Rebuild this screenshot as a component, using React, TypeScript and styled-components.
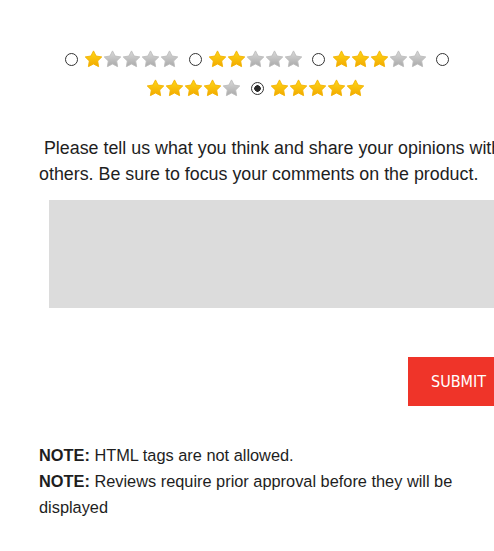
import React from "react";
import styled, { createGlobalStyle } from "styled-components";

const Global = createGlobalStyle`
  html, body {
    margin: 0;
    padding: 0;
    overflow: hidden;
    background: #fff;
  }
  body {
    font-family: "Liberation Sans", Arial, sans-serif;
    color: #1e1e1e;
  }
`;

const Page = styled.form`
  width: 471px;
  padding: 45px 0 0 39px;
  font-size: 16px;
`;

const RatingRow = styled.div`
  width: 434px;
  text-align: center;
  line-height: 29px;
`;

const Radio = styled.input`
  appearance: none;
  -webkit-appearance: none;
  display: inline-block;
  width: 13px;
  height: 13px;
  margin: 3px 3px 0 5px;
  padding: 0;
  border: 1px solid #333;
  border-radius: 50%;
  background: #fff;
  box-sizing: border-box;
  vertical-align: -1px;
  &:checked {
    background: radial-gradient(circle, #2a2a2a 0 3px, #fff 3.5px);
  }
`;

const StarImg = styled.svg`
  display: inline-block;
  vertical-align: -3px;
`;

const Intro = styled.p`
  width: 490px;
  margin: 32px 0 0 0;
  font-size: 17.85px;
  line-height: 26px;
`;

const Comment = styled.textarea`
  display: block;
  box-sizing: border-box;
  margin: 13px 0 0 10px;
  width: 461px;
  height: 108px;
  border: none;
  background: #dcdcdc;
  resize: none;
  outline: none;
`;

const ButtonRow = styled.div`
  display: flex;
  justify-content: flex-end;
  margin-top: 49px;
`;

const Submit = styled.button`
  height: 49px;
  padding: 0 24px 0 22.5px;
  border: none;
  background: #ef3429;
  color: #fff;
  font-family: "DejaVu Sans", Tahoma, sans-serif;
  font-stretch: condensed;
  font-size: 16px;
  cursor: pointer;
`;

const Notes = styled.div`
  margin-top: 36px;
  font-size: 16.35px;
  line-height: 26px;
`;

const Note = styled.div``;

const starPoints = (cx: number, cy: number, R: number, r: number) => {
  const pts: string[] = [];
  for (let i = 0; i < 10; i++) {
    const rad = i % 2 === 0 ? R : r;
    const a = -Math.PI / 2 + (i * Math.PI) / 5;
    pts.push(`${(cx + rad * Math.cos(a)).toFixed(2)},${(cy + rad * Math.sin(a)).toFixed(2)}`);
  }
  return pts.join(" ");
};

const Stars: React.FC<{ filled: number }> = ({ filled }) => (
  <StarImg width="94" height="18" viewBox="0 0 94 18">
    <defs>
      <linearGradient id="gold" x1="0" y1="0" x2="0" y2="1">
        <stop offset="0" stopColor="#ffd817" />
        <stop offset="1" stopColor="#f2a900" />
      </linearGradient>
      <linearGradient id="grey" x1="0" y1="0" x2="0" y2="1">
        <stop offset="0" stopColor="#dadada" />
        <stop offset="1" stopColor="#a9a9a9" />
      </linearGradient>
    </defs>
    {[0, 1, 2, 3, 4].map((i) => (
      <polygon
        key={i}
        points={starPoints(8.5 + i * 19, 9.6, 8.7, 4.4)}
        fill={i < filled ? "url(#gold)" : "url(#grey)"}
        stroke={i < filled ? "#f3b200" : "#bcbcbc"}
        strokeWidth="0.9"
        strokeLinejoin="round"
      />
    ))}
  </StarImg>
);

export default function App() {
  return (
    <>
      <Global />
      <Page onSubmit={(e) => e.preventDefault()}>
        <RatingRow>
          {[1, 2, 3, 4, 5].map((n) => (
            <React.Fragment key={n}>
              <Radio type="radio" name="rating" value={n} defaultChecked={n === 5} />{" "}
              <Stars filled={n} />{" "}
            </React.Fragment>
          ))}
        </RatingRow>
        <Intro>
          {"\u00a0"}Please tell us what you think and share your opinions with others. Be sure to focus your comments on the product.
        </Intro>
        <Comment />
        <ButtonRow>
          <Submit type="submit">SUBMIT</Submit>
        </ButtonRow>
        <Notes>
          <Note>
            <b>NOTE:</b> HTML tags are not allowed.
          </Note>
          <Note>
            <b>NOTE:</b> Reviews require prior approval before they will be displayed
          </Note>
        </Notes>
      </Page>
    </>
  );
}
